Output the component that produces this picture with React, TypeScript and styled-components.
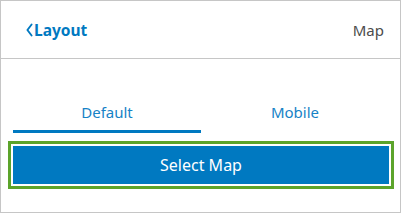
import React from "react";
import styled, { createGlobalStyle } from "styled-components";

const Global = createGlobalStyle`
  html, body { margin: 0; padding: 0; background: #fff; }
  body { font-family: "Noto Sans", "Open Sans", sans-serif; }
  * { box-sizing: border-box; }
`;

const Panel = styled.div`
  width: 401px;
  height: 213px;
  border: 1px solid #c6c6c6;
  display: flex;
  flex-direction: column;
  background: #fff;
`;

const Header = styled.div`
  height: 58px;
  flex: none;
  display: flex;
  align-items: center;
  justify-content: space-between;
  padding: 0 16px 0 25px;
  border-bottom: 1px solid #c6c6c6;
`;

const BackLink = styled.a`
  display: flex;
  align-items: center;
  gap: 1px;
  color: #0079c1;
  font-weight: 700;
  font-size: 15.5px;
  line-height: 20px;
  text-decoration: none;
  cursor: pointer;
`;

const Title = styled.span`
  color: #4c4c4c;
  font-size: 15px;
  line-height: 20px;
`;

const Body = styled.div`
  flex: 1;
  display: flex;
  flex-direction: column;
  padding: 43px 11px 0 12px;
`;

const Tabs = styled.div`
  display: grid;
  grid-template-columns: 1fr 1fr;
`;

const Tab = styled.div<{ $active?: boolean }>`
  text-align: center;
  color: #1682c6;
  font-size: 15px;
  line-height: 20px;
  padding-bottom: 8px;
  border-bottom: 3px solid ${(p) => (p.$active ? "#0079c1" : "transparent")};
`;

const SelectButton = styled.button`
  margin-top: 13px;
  height: 38px;
  width: 100%;
  border: none;
  background: #0079c1;
  color: #fff;
  font-family: inherit;
  font-size: 16px;
  box-shadow: 0 0 0 2px #fff, 0 0 0 5px #5ca42b;
  cursor: pointer;
`;

export default function App() {
  return (
    <>
      <Global />
      <Panel>
        <Header>
          <BackLink>
            <svg width="7" height="14" viewBox="0 0 7 14" fill="none">
              <path d="M5.6 1.5 L1.4 7 L5.6 12.5" stroke="#0079c1" strokeWidth="1.9" strokeLinecap="round" strokeLinejoin="round" />
            </svg>
            Layout
          </BackLink>
          <Title>Map</Title>
        </Header>
        <Body>
          <Tabs>
            <Tab $active>Default</Tab>
            <Tab>Mobile</Tab>
          </Tabs>
          <SelectButton>Select Map</SelectButton>
        </Body>
      </Panel>
    </>
  );
}
